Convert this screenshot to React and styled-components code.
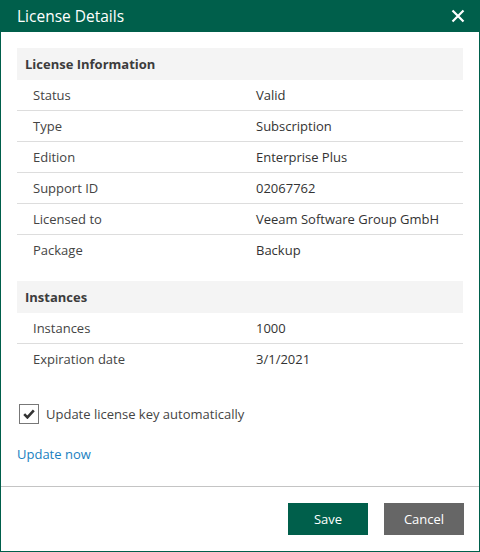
import React from "react";
import styled, { createGlobalStyle } from "styled-components";

const Global = createGlobalStyle`
  html, body {
    margin: 0;
    padding: 0;
    background: #ffffff;
  }
  body {
    font-family: "Open Sans", "Noto Sans", sans-serif;
    font-size: 13px;
    color: #333333;
  }
`;

const Dialog = styled.div`
  width: 480px;
  height: 552px;
  box-sizing: border-box;
  border: 1px solid #005f4b;
  border-top: none;
  display: flex;
  flex-direction: column;
  background: #ffffff;
`;

const TitleBar = styled.div`
  height: 32px;
  margin: 0 -1px;
  background: #005f4b;
  display: flex;
  align-items: center;
  justify-content: space-between;
  padding: 0 12px 0 17px;
`;

const Title = styled.div`
  color: #ffffff;
  font-size: 15.5px;
`;

const CloseButton = styled.button`
  width: 20px;
  height: 20px;
  border: none;
  padding: 0;
  background: transparent;
  display: flex;
  align-items: center;
  justify-content: center;
  cursor: pointer;
`;

const Body = styled.div`
  flex: 1;
  padding: 16px 16px 0 16px;
`;

const Section = styled.div`
  margin-bottom: 16px;
`;

const SectionHeader = styled.div`
  height: 32px;
  background: #f4f4f4;
  display: flex;
  align-items: center;
  padding-left: 8px;
  font-weight: 700;
  color: #3c3c3c;
`;

const Row = styled.div`
  display: grid;
  grid-template-columns: 223px 1fr;
  height: 30px;
  align-items: center;
  padding-left: 16px;
  border-bottom: 1px solid #dddddd;

  &:last-child {
    border-bottom: none;
  }
`;

const Label = styled.span`
  color: #444444;
`;

const Value = styled.span`
  color: #333333;
`;

const CheckRow = styled.label`
  display: flex;
  align-items: center;
  gap: 7px;
  margin-top: 30px;
  padding-left: 2px;
  color: #444444;
`;

const Box = styled.span`
  width: 18px;
  height: 18px;
  border: 1px solid #777777;
  display: flex;
  align-items: center;
  justify-content: center;
  background: #ffffff;
`;

const Link = styled.a`
  display: inline-block;
  margin-top: 21px;
  color: #1a7fc1;
  text-decoration: none;
  cursor: pointer;
`;

const Footer = styled.div`
  border-top: 1px solid #c4c4c4;
  height: 65px;
  box-sizing: border-box;
  display: flex;
  justify-content: flex-end;
  align-items: center;
  gap: 16px;
  padding: 0 15px 0 16px;
`;

const Button = styled.button`
  width: 80px;
  height: 32px;
  border: none;
  color: #ffffff;
  font-family: inherit;
  font-size: 13px;
  background: ${(p) => (p.$primary ? "#005f4b" : "#666666")};
  cursor: pointer;
`;

const licenseRows = [
  ["Status", "Valid"],
  ["Type", "Subscription"],
  ["Edition", "Enterprise Plus"],
  ["Support ID", "02067762"],
  ["Licensed to", "Veeam Software Group GmbH"],
  ["Package", "Backup"],
];

const instanceRows = [
  ["Instances", "1000"],
  ["Expiration date", "3/1/2021"],
];

function App() {
  return (
    <>
      <Global />
      <Dialog>
        <TitleBar>
          <Title>License Details</Title>
          <CloseButton>
            <svg width="14" height="14" viewBox="0 0 14 14">
              <path
                d="M1.5 1.5 L12.5 12.5 M12.5 1.5 L1.5 12.5"
                stroke="#ffffff"
                strokeWidth="2.2"
              />
            </svg>
          </CloseButton>
        </TitleBar>
        <Body>
          <Section>
            <SectionHeader>License Information</SectionHeader>
            {licenseRows.map(([k, v]) => (
              <Row key={k}>
                <Label>{k}</Label>
                <Value>{v}</Value>
              </Row>
            ))}
          </Section>
          <Section>
            <SectionHeader>Instances</SectionHeader>
            {instanceRows.map(([k, v]) => (
              <Row key={k}>
                <Label>{k}</Label>
                <Value>{v}</Value>
              </Row>
            ))}
          </Section>
          <CheckRow>
            <Box>
              <svg width="12" height="10" viewBox="0 0 12 10">
                <path
                  d="M1.2 5.2 L4.4 8.4 L10.8 1.4"
                  fill="none"
                  stroke="#333333"
                  strokeWidth="2.6"
                />
              </svg>
            </Box>
            Update license key automatically
          </CheckRow>
          <Link>Update now</Link>
        </Body>
        <Footer>
          <Button $primary>Save</Button>
          <Button>Cancel</Button>
        </Footer>
      </Dialog>
    </>
  );
}

export default App;
